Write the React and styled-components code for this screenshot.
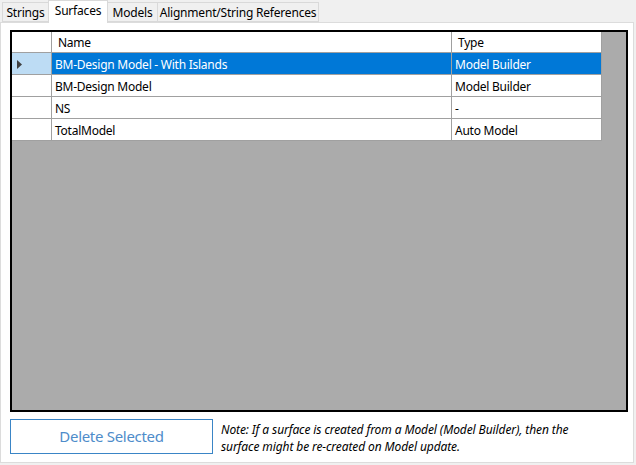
import React from "react";
import styled, { createGlobalStyle } from "styled-components";

const Global = createGlobalStyle`
  html, body { margin: 0; padding: 0; background: #f0f0f0; }
  body { font-family: "Noto Sans", "Open Sans", sans-serif; font-size: 12px; color: #000; }
  * { box-sizing: border-box; }
`;

const Root = styled.div`
  width: 636px;
  height: 465px;
  background: #f0f0f0;
  display: flex;
  flex-direction: column;
`;

const TabStrip = styled.div`
  height: 22px;
  display: flex;
  align-items: flex-end;
  padding-left: 2px;
  position: relative;
  z-index: 1;
`;

const Tab = styled.div`
  width: ${(p) => p.$w}px;
  height: ${(p) => (p.$active ? 23 : 20)}px;
  margin-bottom: ${(p) => (p.$active ? -1 : 0)}px;
  border: 1px solid #d9d9d9;
  border-bottom: ${(p) => (p.$active ? "none" : "1px solid #d9d9d9")};
  margin-left: ${(p) => (p.$first ? 0 : -1)}px;
  background: ${(p) => (p.$active ? "#ffffff" : "#f0f0f0")};
  display: flex;
  align-items: center;
  justify-content: center;
  padding-bottom: ${(p) => (p.$active ? 3 : 0)}px;
  font-size: 12px;
  white-space: nowrap;
  letter-spacing: -0.2px;
`;

const Panel = styled.div`
  width: 634px;
  height: 441px;
  background: #fff;
  border: 1px solid #dcdcdc;
  padding: 7px 5px 7px 9px;
  display: flex;
  flex-direction: column;
`;

const Grid = styled.div`
  width: 618px;
  height: 384px;
  border: 2px solid #000;
  background: #ababab;
  display: flex;
  flex-direction: column;
  align-items: flex-start;
`;

const Table = styled.div`
  display: grid;
  grid-template-columns: 40px 400px 150px;
  grid-auto-rows: 22px;
  grid-template-rows: 21px;
`;

const HeadCell = styled.div`
  background: #fff;
  border-right: 1px solid #a0a0a0;
  border-bottom: 1px solid #a0a0a0;
  padding-left: ${(p) => p.$pad || 0}px;
  display: flex;
  align-items: center;
  padding-top: 1px;
  font-size: 12px;
  letter-spacing: -0.25px;
`;

const RowHead = styled.div`
  background: ${(p) => (p.$sel ? "#bddcf4" : "#fff")};
  border-right: 1px solid #a0a0a0;
  border-bottom: 1px solid #a0a0a0;
  display: flex;
  align-items: center;
  padding-left: 5px;
  padding-top: 1px;
`;

const Cell = styled.div`
  background: ${(p) => (p.$sel ? "#0078d7" : "#fff")};
  color: ${(p) => (p.$sel ? "#fff" : "#000")};
  border-right: 1px solid #a0a0a0;
  border-bottom: 1px solid #a0a0a0;
  padding-left: 3px;
  padding-top: 2px;
  display: flex;
  align-items: center;
  white-space: nowrap;
  overflow: hidden;
  font-size: 12px;
  letter-spacing: -0.25px;
`;

const Footer = styled.div`
  margin-top: 6px;
  display: flex;
  gap: 8px;
  align-items: center;
`;

const Button = styled.button`
  width: 203px;
  height: 35px;
  background: #fff;
  border: 1px solid #3a85c6;
  color: #4e8cca;
  font-family: "Noto Sans", "Open Sans", sans-serif;
  font-size: 15px;
  letter-spacing: -0.3px;
  padding: 0 0 1px;
  cursor: default;
`;

const Note = styled.div`
  font-style: italic;
  font-size: 12px;
  line-height: 17px;
  letter-spacing: -0.1px;
  margin-top: 3px;
`;

const Arrow = () => (
  <svg width="6" height="9" viewBox="0 0 6 9">
    <path d="M0 0 L5 4.5 L0 9 Z" fill="#404040" />
  </svg>
);

const rows = [
  { name: "BM-Design Model - With Islands", type: "Model Builder", sel: true },
  { name: "BM-Design Model", type: "Model Builder" },
  { name: "NS", type: "-" },
  { name: "TotalModel", type: "Auto Model" },
];

export default function App() {
  return (
    <>
      <Global />
      <Root>
        <TabStrip>
          <Tab $w={47} $first>Strings</Tab>
          <Tab $w={60} $active>Surfaces</Tab>
          <Tab $w={51}>Models</Tab>
          <Tab $w={162}>Alignment/String References</Tab>
        </TabStrip>
        <Panel>
          <Grid>
            <Table>
              <HeadCell />
              <HeadCell $pad={6}>Name</HeadCell>
              <HeadCell $pad={6}>Type</HeadCell>
              {rows.map((r) => (
                <React.Fragment key={r.name}>
                  <RowHead $sel={r.sel}>{r.sel && <Arrow />}</RowHead>
                  <Cell $sel={r.sel}>{r.name}</Cell>
                  <Cell $sel={r.sel}>{r.type}</Cell>
                </React.Fragment>
              ))}
            </Table>
          </Grid>
          <Footer>
            <Button>Delete Selected</Button>
            <Note>
              Note: If a surface is created from a Model (Model Builder), then the
              <br />
              surface might be re-created on Model update.
            </Note>
          </Footer>
        </Panel>
      </Root>
    </>
  );
}
